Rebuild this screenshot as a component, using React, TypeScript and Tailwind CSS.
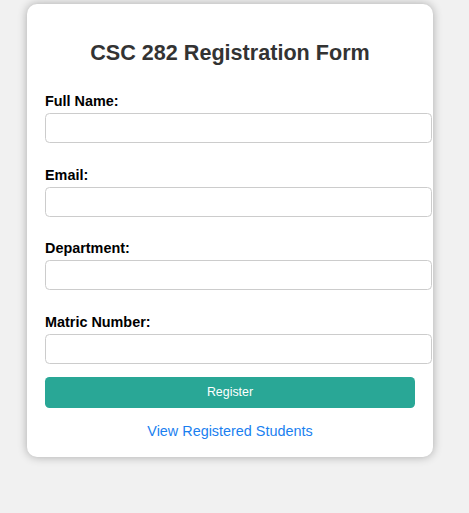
import React from "react";

const fields = ["Full Name:", "Email:", "Department:", "Matric Number:"];

const App: React.FC = () => {
  return (
    <div
      className="min-h-[513px] bg-[#f1f1f1] pt-[4px]"
      style={{ fontFamily: '"Liberation Sans", Arial, sans-serif' }}
    >
      <div className="ml-[27px] w-[406px] rounded-[10px] bg-white px-[18px] pt-[18px] pb-[18px] shadow-[0_0_10px_rgba(0,0,0,0.3)]">
        <h2 className="mt-[18px] mb-[18px] text-center text-[21.6px] font-bold leading-[25px] text-[#333]">
          CSC 282 Registration Form
        </h2>
        <form onSubmit={(e) => e.preventDefault()}>
          {fields.map((label, i) => (
            <div key={label} className={i === 0 ? "pt-[10px]" : "pt-[23.5px]"}>
              <label className="block text-[14.4px] font-bold leading-[16.5px] text-black">
                {label}
              </label>
              <input
                type="text"
                className="mt-[3.5px] block h-[30px] w-[387px] rounded-[4.5px] border border-[#ccc] bg-white px-[8px] text-[14.4px] outline-none"
              />
            </div>
          ))}
          <button
            type="submit"
            className="mt-[13.5px] block h-[31px] w-[370px] rounded-[4.5px] bg-[#29a796] text-[12.4px] text-white"
          >
            Register
          </button>
        </form>
        <div className="mt-[14.5px] text-center text-[14.4px] leading-[16.5px]">
          <a href="#" className="text-[#1a7ff0]">
            View Registered Students
          </a>
        </div>
      </div>
    </div>
  );
};

export default App;
